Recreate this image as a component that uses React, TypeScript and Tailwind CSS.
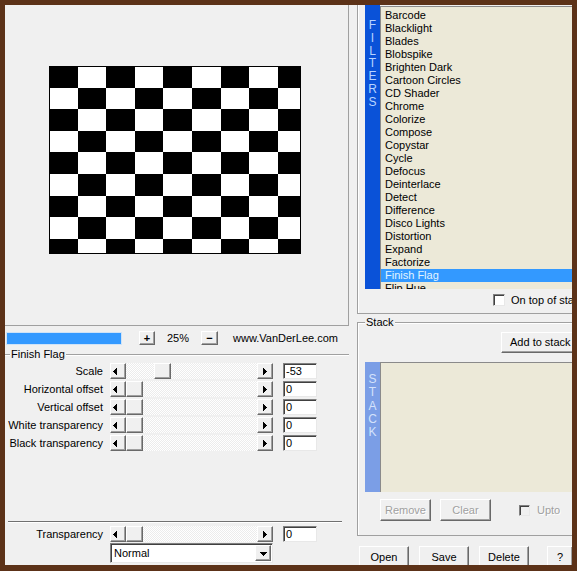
import React from "react";

const font = "font-['Liberation_Sans',Arial,sans-serif]";
const raised =
  "border border-t-white border-l-white border-r-[#696969] border-b-[#696969] shadow-[inset_-1px_-1px_0_#a0a0a0] bg-[#f0f0f0]";
const sunken =
  "border border-t-[#808080] border-l-[#808080] border-r-[#e8e8e8] border-b-[#e8e8e8] shadow-[inset_1px_1px_0_#404040]";

const filters = [
  "Barcode",
  "Blacklight",
  "Blades",
  "Blobspike",
  "Brighten Dark",
  "Cartoon Circles",
  "CD Shader",
  "Chrome",
  "Colorize",
  "Compose",
  "Copystar",
  "Cycle",
  "Defocus",
  "Deinterlace",
  "Detect",
  "Difference",
  "Disco Lights",
  "Distortion",
  "Expand",
  "Factorize",
  "Finish Flag",
  "Flip Hue",
];

const sliders = [
  { label: "Scale", value: "-53", thumb: 28 },
  { label: "Horizontal offset", value: "0", thumb: 0 },
  { label: "Vertical offset", value: "0", thumb: 0 },
  { label: "White transparency", value: "0", thumb: 0 },
  { label: "Black transparency", value: "0", thumb: 0 },
];

function Checkerboard() {
  const cw = 28.6;
  const ch = 21.6;
  const cells: React.ReactNode[] = [];
  for (let r = 0; r < 9; r++) {
    for (let c = 0; c < 9; c++) {
      if ((r + c) % 2 === 0) {
        cells.push(
          <rect key={`${r}-${c}`} x={c * cw} y={r * ch} width={cw} height={ch} fill="#000" />,
        );
      }
    }
  }
  return (
    <svg width={252} height={188} viewBox="0 0 252 188" className="block" shapeRendering="crispEdges">
      <rect x={0} y={0} width={252} height={188} fill="#fff" />
      {cells}
      <rect x={0.5} y={0.5} width={251} height={187} fill="none" stroke="#000" />
    </svg>
  );
}

function Arrow({ dir }: { dir: "left" | "right" | "down" }) {
  const pts =
    dir === "left" ? "6,3.5 2,7.5 6,11.5" : dir === "right" ? "5,3.5 9,7.5 5,11.5" : "3.5,6 11.5,6 7.5,10";
  return (
    <div className={`${raised} flex h-4 w-4 shrink-0 items-center justify-center`}>
      <svg width={14} height={14} viewBox="0 0 14 14" className="block" shapeRendering="crispEdges">
        <polygon points={pts} fill="#000" />
      </svg>
    </div>
  );
}

function HScroll({ thumb }: { thumb: number }) {
  return (
    <div className="flex h-4 w-[163px] shrink-0">
      <Arrow dir="left" />
      <div className="flex flex-1 bg-[repeating-conic-gradient(#ffffff_0_25%,#ececec_0_50%)] bg-size-[2px_2px]">
        <div className={`${raised} h-4 w-[17px]`} style={{ marginLeft: thumb }} />
      </div>
      <Arrow dir="right" />
    </div>
  );
}

function ValueBox({ value }: { value: string }) {
  return (
    <div className={`${sunken} flex h-4 w-[34px] items-center bg-white pl-[2px] text-[11px] leading-none`}>
      {value}
    </div>
  );
}

function SliderRow({ label, value, thumb }: { label: string; value: string; thumb: number }) {
  return (
    <div className="flex h-4 items-center">
      <div className="w-[98px] shrink-0 text-right text-[11px] leading-none">{label}</div>
      <div className="ml-[7px]">
        <HScroll thumb={thumb} />
      </div>
      <div className="ml-[10px]">
        <ValueBox value={value} />
      </div>
    </div>
  );
}

function Button({ children, disabled, className = "" }: { children: React.ReactNode; disabled?: boolean; className?: string }) {
  return (
    <div
      className={`${raised} flex shrink-0 items-center justify-center text-[11px] leading-none ${
        disabled ? "text-[#a0a0a0] [text-shadow:1px_1px_0_#ffffff]" : "text-black"
      } ${className}`}
    >
      {children}
    </div>
  );
}

function Checkbox({ disabled, className = "" }: { disabled?: boolean; className?: string }) {
  return (
    <div
      className={`${sunken} shrink-0 ${disabled ? "bg-[#f0f0f0]" : "bg-white"} ${className}`}
    />
  );
}

function SideStrip({ letters, tone, className = "" }: { letters: string; tone: "on" | "off"; className?: string }) {
  return (
    <div
      className={`flex w-[15px] shrink-0 flex-col items-center text-[12px] ${
        tone === "on" ? "bg-[#0a52d8] text-[#b8d4ff]" : "bg-[#7b9ee6] text-[#d4e2fb]"
      } ${className}`}
    >
      {letters.split("").map((ch, i) => (
        <span key={i}>{ch}</span>
      ))}
    </div>
  );
}

export default function App() {
  return (
    <div className={`${font} h-[571px] w-[577px] bg-[#5c3218] pt-[5px] pl-[5px] text-black`}>
      <div className="flex h-[560px] w-[567px] overflow-hidden bg-[#f0f0f0]">
        {/* left: preview and parameters */}
        <div className="flex w-[344px] shrink-0 flex-col">
          <div className="h-[321px] border-r border-b border-[#a0a0a0] pt-[61px] pl-[44px]">
            <Checkerboard />
          </div>

          <div className="mt-[5px] flex h-[14px] items-center">
            <div className="ml-[1px] h-[13px] w-[116px] border border-[#cfe3f7] bg-[#3399ff]" />
            <Button className="ml-[17px] h-[14px] w-4 font-bold">+</Button>
            <div className="w-[46px] text-center text-[11px] leading-none">25%</div>
            <Button className="h-[14px] w-[17px] font-bold">−</Button>
            <div className="ml-[15px] text-[11px] leading-none whitespace-nowrap">www.VanDerLee.com</div>
          </div>

          <div className="relative mt-[9px] border-t border-[#a0a0a0] pt-[8px] shadow-[inset_0_1px_0_#ffffff]">
            <span className="absolute -top-[7px] left-[5px] bg-[#f0f0f0] px-px text-[11px] leading-[13px]">
              Finish Flag
            </span>
            <div className="flex flex-col gap-[2px]">
              {sliders.map((s) => (
                <SliderRow key={s.label} {...s} />
              ))}
            </div>
          </div>

          <div className="mt-[70px] ml-[3px] w-[334px] border-t border-b border-t-[#707070] border-b-white" />

          <div className="mt-[3px]">
            <SliderRow label="Transparency" value="0" thumb={0} />
          </div>
          <div className={`${sunken} mt-px ml-[105px] flex h-5 w-[163px] items-center justify-between bg-white pr-px pl-[3px]`}>
            <span className="text-[11px] leading-none">Normal</span>
            <Arrow dir="down" />
          </div>
        </div>

        {/* right: filters and stack */}
        <div className="flex w-[223px] shrink-0 flex-col overflow-hidden">
          <div className="ml-[8px] h-[309px] w-[240px] shrink-0 border-b border-l border-[#a0a0a0] pl-[7px] shadow-[inset_1px_0_0_#ffffff]">
            <div className="flex h-[284px] items-start">
              <SideStrip letters="FILTERS" tone="on" className="h-[284px] pt-[14px] leading-[12.8px]" />
              <div className="mt-px h-[283px] flex-1 overflow-hidden border-t border-l border-[#8a8a8a] bg-[#ece9d8] pt-[2px]">
                {filters.map((f) => (
                  <div
                    key={f}
                    className={`h-[13px] pl-[4px] text-[11px] leading-[13px] whitespace-nowrap ${
                      f === "Finish Flag" ? "bg-[#3399ff] text-[#e2f4ff]" : ""
                    }`}
                  >
                    {f}
                  </div>
                ))}
              </div>
            </div>
            <div className="mt-[5px] ml-[128px] flex h-3 items-center">
              <Checkbox className="h-3 w-3" />
              <span className="ml-[6px] text-[11px] leading-none whitespace-nowrap">On top of stack</span>
            </div>
          </div>

          <div className="relative mt-[8px] ml-[8px] h-[214px] w-[240px] shrink-0 border-t border-b border-l border-[#a0a0a0] shadow-[inset_1px_1px_0_#ffffff]">
            <span className="absolute -top-[7px] left-[7px] bg-[#f0f0f0] px-px text-[11px] leading-[13px]">Stack</span>
            <Button className="mt-[9px] ml-[143px] h-[21px] w-[80px] justify-start pl-[8px]">Add to stack</Button>
            <div className="mt-[9px] flex h-[130px] pl-[7px]">
              <SideStrip letters="STACK" tone="off" className="h-[130px] pt-[11px] leading-[13.3px]" />
              <div className="flex-1 border-t border-l border-[#8a8a8a] bg-[#ece9d8]" />
            </div>
            <div className="mt-[7px] flex h-[22px] items-center pl-[22px]">
              <Button disabled className="h-[22px] w-[51px]">Remove</Button>
              <Button disabled className="ml-[9px] h-[22px] w-[51px]">Clear</Button>
              <Checkbox disabled className="ml-[28px] h-[11px] w-[11px]" />
              <span className="ml-[7px] text-[11px] leading-none text-[#a0a0a0] [text-shadow:1px_1px_0_#ffffff]">Upto</span>
            </div>
          </div>

          <div className="mt-[10px] ml-[10px] flex">
            <Button className="h-[22px] w-[50px]">Open</Button>
            <Button className="ml-[10px] h-[22px] w-[50px]">Save</Button>
            <Button className="ml-[10px] h-[22px] w-[50px]">Delete</Button>
            <Button className="ml-[18px] h-[22px] w-[26px]">?</Button>
          </div>
        </div>
      </div>
    </div>
  );
}
